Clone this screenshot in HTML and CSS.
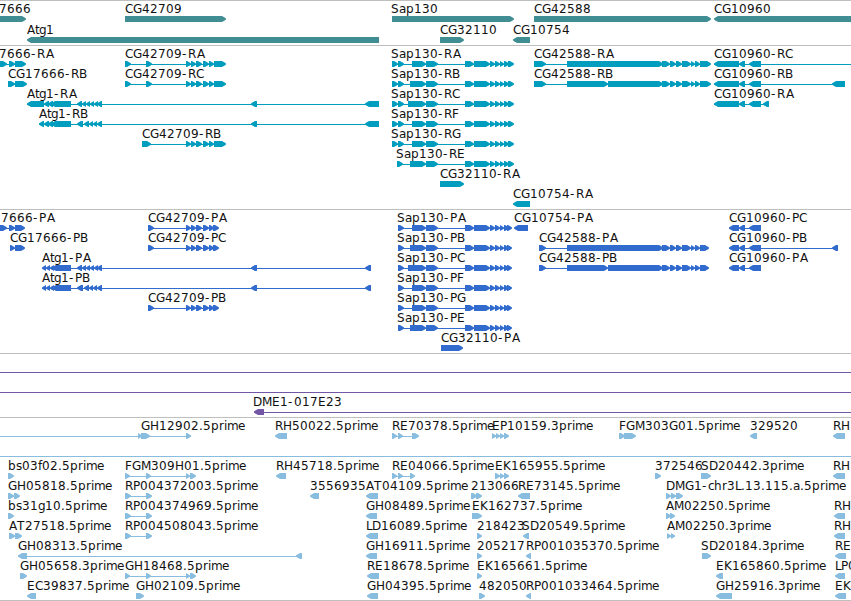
FILE: index.html
```
<!DOCTYPE html>
<html lang="en">
<head>
<meta charset="utf-8">
<title>Genome tracks</title>
<link rel="stylesheet" href="styles.css">
</head>
<body>
<main class="browser" id="browser"></main>
<script src="tracks.js"></script>
</body>
</html>
```
FILE: styles.css
```
body {
  margin: 0;
  background: #fff;
  overflow: hidden;
}

.browser {
  display: flex;
  flex-direction: column;
  width: 851px;
  height: 601px;
  box-sizing: border-box;
  border-bottom: 1px solid #bfbfbf;
  overflow: hidden;
}

.track {
  display: flex;
  flex-direction: column;
  padding: 2px 0 1px;
  border-top: 1px solid #bfbfbf;
}

.row {
  display: block;
  flex: none;
  width: 851px;
  height: 20px;
  overflow: visible;
}

.row text {
  font: 12px "DejaVu Sans", sans-serif;
  fill: #111;
}

.genes { color: #408e94; padding-bottom: 0; }
.genes .row { height: 21px; }
.transcripts { color: #009dbf; }
.proteins { color: #316bcd; }
.clones { color: #7356a5; }
.ests { color: #89bddf; padding-bottom: 0; }
```
FILE: tracks.js
```
// Feature: "label | label x | strand | exon ranges | optional connector range"
const TAIL = '465-474 474-490 490-495 495-500 500-504 504-509';
const LONG = '662-670 670-676 676-682 682-691 691-695 695-700';
const FIVE = '125-131 146-152';
const tracks = {
  genes: [
    ['7666|-1|+|-9-26', 'CG42709|125|+|125-226', 'Sap130|391|+|392-514', 'CG42588|534|+|534-711', 'CG10960|714|-|714-870'],
    ['Atg1|27|-|27-379', 'CG32110|440|+|440-464', 'CG10754|513|-|513-530']
  ],
  transcripts: [
    ['7666-RA|-1|+|-1-7 9-15 15-26', 'CG42709-RA|125|+|125-131 146-152 186-191 191-196 196-202 203-209 209-214 214-226',
     `Sap130-RA|391|+|392-398 398-404 412-426 426-438 ${TAIL} 508-514`, `CG42588-RA|534|+|534-546 567-663 ${LONG} 700-711`,
     'CG10960-RC|714|-|714-739 739-745 749-761|714-860'],
    ['CG17666-RB|8|+|8-15 15-27', 'CG42709-RC|125|+|125-131 146-152 186-191 191-196 196-202 203-209 209-214 214-226',
     `Sap130-RB|391|+|392-398 398-404 410-426 426-438 ${TAIL} 508-514`, `CG42588-RB|534|+|534-546 567-608 608-663 ${LONG} 700-711`,
     'CG10960-RB|714|-|714-739 739-745 749-761 832-845'],
    ['Atg1-RA|27|-|27-44 44-49 48-53 51-71 77-82 82-86 86-90 90-94 94-98 97-102 251-257 365-379',
     `Sap130-RC|391|+|392-398 398-404 408-426 426-438 ${TAIL} 508-514`, 'CG10960-RA|714|-|714-739 739-745 749-761 763-769'],
    ['Atg1-RB|39|-|39-44 44-49 48-53 51-71 77-83 84-89 89-93 93-97 97-102 251-257 365-379',
     `Sap130-RF|391|+|392-398 398-404 412-426 426-438 ${TAIL} 508-514`],
    ['CG42709-RB|142|+|142-151 186-191 191-196 196-202 203-209 209-214 214-226',
     `Sap130-RG|391|+|392-398 398-404 412-426 426-438 ${TAIL} 508-514`],
    [`Sap130-RE|396|+|397-403 410-426 426-438 ${TAIL} 508-514`],
    ['CG32110-RA|440|+|440-464'],
    ['CG10754-RA|513|-|513-530']
  ],
  proteins: [
    ['7666-PA|1|+|-1-7 9-15 15-25', 'CG42709-PA|148|+|148-154 186-191 191-196 196-202 203-209 209-214 213-219',
     `Sap130-PA|397|+|398-404 412-426 426-438 ${TAIL} 507-512`, 'CG10754-PA|514|-|514-528', 'CG10960-PC|729|-|729-739 739-745 749-761'],
    ['CG17666-PB|10|+|10-15 15-25', 'CG42709-PC|148|+|148-154 186-191 191-196 196-202 203-209 209-214 213-219',
     `Sap130-PB|397|+|398-404 410-426 426-438 ${TAIL} 507-512`, `CG42588-PA|539|+|539-546 567-663 ${LONG} 700-709`,
     'CG10960-PB|729|-|729-739 739-745 749-761 832-838'],
    ['Atg1-PA|42|-|42-46 46-50 50-54 52-71 77-82 82-86 86-90 90-94 94-98 97-102 251-257 365-371',
     `Sap130-PC|397|+|398-404 408-426 426-438 ${TAIL} 507-512`, `CG42588-PB|539|+|539-546 567-608 608-663 ${LONG} 700-709`,
     'CG10960-PA|729|-|729-739 739-745 749-761'],
    ['Atg1-PB|42|-|42-46 46-50 50-54 52-71 77-83 84-89 89-93 93-97 97-102 251-257 365-371',
     `Sap130-PF|397|+|398-404 412-426 426-438 ${TAIL} 507-512`],
    ['CG42709-PB|148|+|148-154 186-191 191-196 196-202 203-209 209-214 213-219',
     `Sap130-PG|397|+|398-404 412-426 426-438 ${TAIL} 507-512`],
    [`Sap130-PE|397|+|398-404 410-426 426-438 ${TAIL} 507-512`],
    ['CG32110-PA|441|+|441-463']
  ],
  clones: [
    ['||+||0-851'],
    ['||+||0-851'],
    ['DME1-017E23|253|-|254-264|254-851']
  ],
  ests: [
    ['GH12902.5prime|141|+|138-142 141-150 186-191|0-191', 'RH50022.5prime|275|-|275-287', 'RE70378.5prime|392|+|392-397 398-403 412-419',
     'EP10159.3prime|492|+|492-496 496-500 500-504 504-509', 'FGM303G01.5prime|619|+|619-625 624-636', '329520|750|-|750-757', 'RH|833|-|833-845'],
    ['||+||0-851'],
    ['bs03f02.5prime|8|+|8-14', 'FGM309H01.5prime|125|+|125-130 146-151 186-190 190-196', 'RH45718.5prime|276|-|276-286',
     'RE04066.5prime|392|+|392-397 398-403 410-415', 'EK165955.5prime|495|+|495-500 500-504 504-509', '372546|655|+|655-661',
     'SD20442.3prime|701|+|701-711', 'RH|833|-|833-845'],
    ['GH05818.5prime|8|+|8-14 14-20', `RP004372003.5prime|125|+|${FIVE}`, '3556935|310|-|310-319', 'AT04109.5prime|366|-|366-378',
     '213066|471|+|471-477 476-482', 'RE73145.5prime|518|-|518-530', 'DMG1-chr3L.13.115.a.5prime|666|+|666-671 671-676 676-683'],
    ['bs31g10.5prime|8|+|8-14', `RP004374969.5prime|125|+|${FIVE}`, 'GH08489.5prime|366|-|366-377', 'EK162737.5prime|472|+|472-482',
     'AM02250.5prime|666|+|666-671 670-675', 'RH|834|-|834-845'],
    ['AT27518.5prime|9|+|9-15 15-22', `RP004508043.5prime|125|+|${FIVE}`, 'LD16089.5prime|366|-|366-378', '218423|477|+|477-482',
     'SD20549.5prime|522|-|523-529', 'AM02250.3prime|667|+|667-671 671-675', 'RH|834|-|834-845'],
    ['GH08313.5prime|18|-|18-27 296-302', 'GH16911.5prime|366|-|366-377', '205217|477|+|477-482', 'RP001035370.5prime|526|-|526-531',
     'SD20184.3prime|701|+|702-711', 'RE|835|-|835-846'],
    ['GH05658.3prime|20|+|20-27', 'GH18468.5prime|125|+|125-130 146-151 186-190 190-196', 'RE18678.5prime|367|-|367-379',
     'EK165661.5prime|477|+|477-482', 'EK165860.5prime|716|-|716-723', 'LP0|835|-|835-845'],
    ['EC39837.5prime|27|-|27-36', 'GH02109.5prime|136|+|136-144', 'GH04395.5prime|367|-|367-378', '482050|479|+|479-485',
     'RP001033464.5prime|526|-|526-531', 'GH25916.3prime|716|-|716-732', 'EK|835|-|835-846']
  ]
};

// Whole-pixel glyph advances; any character not listed is 8px wide
const advance = { G: 9, H: 9, D: 9, M: 10, P: 7, F: 7, L: 6, '-': 6, '.': 4, a: 7, t: 4, g: 7, s: 6, f: 4, c: 6, r: 5, i: 3, m: 11, e: 7 };
const NS = 'http://www.w3.org/2000/svg';

function add(parent, tag, attrs, text) {
  const el = document.createElementNS(NS, tag);
  for (const k in attrs) el.setAttribute(k, attrs[k]);
  if (text) el.textContent = text;
  parent.appendChild(el);
}

function drawFeature(svg, spec) {
  const [label, x, strand, ranges, connector] = spec.split('|');
  const parse = r => r.match(/^(-?\d+)-(\d+)$/).slice(1).map(Number);
  const exons = ranges ? ranges.split(' ').map(parse) : [];
  const [from, to] = connector ? parse(connector) : [exons[0][0], exons[exons.length - 1][1]];
  if (connector || exons.length > 1) {
    add(svg, 'rect', { x: from, y: 16, width: to - from - (connector ? 0 : 2), height: 1, fill: 'currentColor' });
  }
  for (const [a, b] of exons) {
    const [tail, tip, s] = strand === '+' ? [a, b, 1] : [b, a, -1];
    const d = `M${tail} 13H${tip - 4 * s}L${tip - s} 14.8L${tip} 15.5V16.5L${tip - s} 17.2L${tip - 4 * s} 19H${tail}Z`;
    add(svg, 'path', { d, fill: 'currentColor' });
  }
  if (label) {
    let pos = Number(x);
    const xs = [...label].map((c, i) => {
      if (c === 'A' && i > 1) pos += 1;
      const p = pos;
      pos += advance[c] || 8;
      return p;
    });
    add(svg, 'text', { x: xs.join(' '), y: 10 }, label);
  }
}

for (const [name, rows] of Object.entries(tracks)) {
  const track = document.createElement('section');
  track.className = `track ${name}`;
  for (const features of rows) {
    const svg = document.createElementNS(NS, 'svg');
    svg.setAttribute('class', 'row');
    features.forEach(f => drawFeature(svg, f));
    track.appendChild(svg);
  }
  document.getElementById('browser').appendChild(track);
}
```
